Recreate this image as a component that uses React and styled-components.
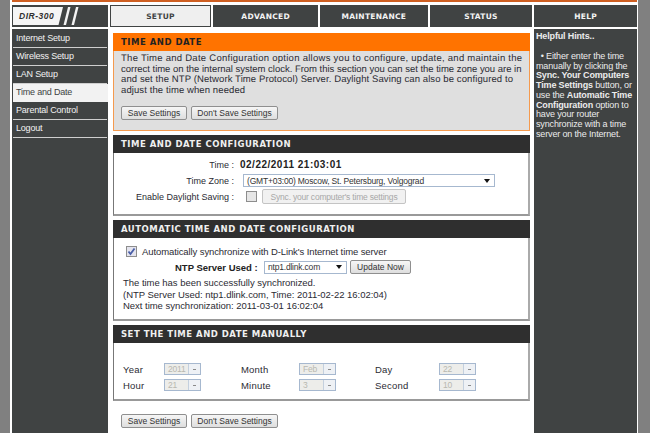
import React from 'react';
import styled, { createGlobalStyle } from 'styled-components';

const GlobalStyle = createGlobalStyle`
  html, body { margin: 0; padding: 0; background: #808080; }
  * { box-sizing: border-box; }
`;

const TABS = [
  { label: 'SETUP', width: 102, active: true },
  { label: 'ADVANCED', width: 105 },
  { label: 'MAINTENANCE', width: 108 },
  { label: 'STATUS', width: 103 },
  { label: 'HELP', width: 103 },
];

const MENU = ['Internet Setup', 'Wireless Setup', 'LAN Setup', 'Time and Date', 'Parental Control', 'Logout'];

function Select({ value, width, disabled }) {
  return (
    <SelectBox $width={width} $disabled={disabled}>
      <span>{value}</span>
      {disabled ? <SmallArrow /> : <Arrow />}
    </SelectBox>
  );
}

export default function App() {
  return (
    <Page>
      <GlobalStyle />
      <Frame>
        <TopLine />
        <TabRow>
          <LogoCell>
            <LogoBadge>DIR-300</LogoBadge>
            <svg width="20" height="18" viewBox="0 0 20 18">
              <path d="M5 0h2.500L3 18H.5zM13 0h2.500L11 18H8.500z" fill="#f2f2f2" />
            </svg>
          </LogoCell>
          {TABS.map(t => (
            <Tab key={t.label} $width={t.width} $active={t.active}>{t.label}</Tab>
          ))}
        </TabRow>
        <Columns>
          <Sidebar>
            {MENU.map(m => (
              <MenuItem key={m} $active={m === 'Time and Date'}>{m}</MenuItem>
            ))}
          </Sidebar>
          <Center>
            <IntroBox>
              <IntroTitle>TIME AND DATE</IntroTitle>
              <IntroBody>
                <IntroLine $spacing={0.27}>The Time and Date Configuration option allows you to configure, update, and maintain the</IntroLine>
                <IntroLine $spacing={-0.02}>correct time on the internal system clock. From this section you can set the time zone you are in</IntroLine>
                <IntroLine $spacing={0.1}>and set the NTP (Network Time Protocol) Server. Daylight Saving can also be configured to</IntroLine>
                <IntroLine $spacing={0.1}>adjust the time when needed</IntroLine>
                <ButtonRow>
                  <Button $width={66}>Save Settings</Button>
                  <Button $width={87}>Don't Save Settings</Button>
                </ButtonRow>
              </IntroBody>
            </IntroBox>

            <Box>
              <BoxTitle>TIME AND DATE CONFIGURATION</BoxTitle>
              <ConfigBody>
                <FieldLabel>Time :</FieldLabel>
                <TimeValue>02/22/2011 21:03:01</TimeValue>
                <FieldLabel>Time Zone :</FieldLabel>
                <Select value="(GMT+03:00) Moscow, St. Petersburg, Volgograd" width={252} />
                <FieldLabel>Enable Daylight Saving :</FieldLabel>
                <DaylightRow>
                  <CheckBox />
                  <Button $width={144} $height={15} $disabled>Sync. your computer's time settings</Button>
                </DaylightRow>
              </ConfigBody>
            </Box>

            <Box>
              <BoxTitle>AUTOMATIC TIME AND DATE CONFIGURATION</BoxTitle>
              <AutoBody>
                <AutoCheckRow>
                  <CheckBox $checked>
                    <svg width="9" height="9" viewBox="0 0 9 9">
                      <path d="M1.500 4.500l2 2.500 4-5.500" fill="none" stroke="#4a5fa8" strokeWidth="1.800" />
                    </svg>
                  </CheckBox>
                  <span>Automatically synchronize with D-Link's Internet time server</span>
                </AutoCheckRow>
                <NtpRow>
                  <NtpLabel>NTP Server Used :</NtpLabel>
                  <Select value="ntp1.dlink.com" width={83} />
                  <Button $width={61} $height={14}>Update Now</Button>
                </NtpRow>
                <SyncMessage>
                  The time has been successfully synchronized.<br />
                  (NTP Server Used: ntp1.dlink.com, Time: 2011-02-22 16:02:04)<br />
                  Next time synchronization: 2011-03-01 16:02:04
                </SyncMessage>
              </AutoBody>
            </Box>

            <Box>
              <BoxTitle>SET THE TIME AND DATE MANUALLY</BoxTitle>
              <ManualBody>
                <span>Year</span><Select value="2011" width={37} disabled />
                <span>Month</span><Select value="Feb" width={37} disabled />
                <span>Day</span><Select value="22" width={37} disabled />
                <span>Hour</span><Select value="21" width={37} disabled />
                <span>Minute</span><Select value="3" width={37} disabled />
                <span>Second</span><Select value="10" width={37} disabled />
              </ManualBody>
            </Box>

            <BottomButtons>
              <Button $width={66}>Save Settings</Button>
              <Button $width={87}>Don't Save Settings</Button>
            </BottomButtons>
          </Center>
          <Hints>
            <HintsTitle>Helpful Hints..</HintsTitle>
            <HintsText>
              &nbsp;&nbsp;• Either enter the time<br />
              manually by clicking the<br />
              <b>Sync. Your Computers</b><br />
              <b>Time Settings</b> button, or<br />
              use the <b>Automatic Time</b><br />
              <b>Configuration</b> option to<br />
              have your router<br />
              synchronize with a time<br />
              server on the Internet.
            </HintsText>
          </Hints>
        </Columns>
      </Frame>
    </Page>
  );
}

const Page = styled.div`
height: 433px;
overflow: hidden;
padding: 0 12px 0 10px;
font-family: "Liberation Sans", Arial, sans-serif;
font-size: 9.500px;
color: #2b2b33;
`

const Frame = styled.div`
height: 433px;
background: #fff;
padding: 0 1px 0 2px;
`

const TopLine = styled.div`
height: 2px;
background: #cf5f22;
`

const TabRow = styled.div`
display: flex;
height: 22px;
margin-top: 3px;
`

const LogoCell = styled.div`
width: 96px;
margin-right: 2px;
background: #404343;
display: flex;
align-items: center;
padding-left: 1px;
`

const LogoBadge = styled.div`
width: 50px;
height: 18px;
background: #f5f5f5;
clip-path: polygon(0 0, 100% 0, 91% 100%, 0 100%);
color: #2f2f2f;
font: italic bold 8.500px "Liberation Sans", sans-serif;
letter-spacing: 0.500px;
line-height: 18px;
padding-left: 6px;
`

const Tab = styled.div`
width: ${p => p.$width}px;
margin-right: 2px;
background: ${p => (p.$active ? '#efefef' : '#404343')};
border: ${p => (p.$active ? '1px solid #404343' : 'none')};
color: ${p => (p.$active ? '#404343' : '#f4f4f4')};
font: bold 7.500px "DejaVu Sans", sans-serif;
letter-spacing: 0.300px;
display: flex;
align-items: center;
justify-content: center;
&:last-child { margin-right: 0; }
`

const Columns = styled.div`
display: grid;
grid-template-columns: 96px 426px 103px;
margin-top: 2px;
`

const Sidebar = styled.div`
background: #404343;
height: 410px;
padding: 1px 1px 0 1px;
`

const MenuItem = styled.div`
height: 18px;
line-height: 16px;
padding-left: 3px;
margin-right: ${p => (p.$active ? '-1px' : '0')};
background: ${p => (p.$active ? '#f2f2f2' : 'transparent')};
color: ${p => (p.$active ? '#404343' : '#f2f2f2')};
border-bottom: 1px solid ${p => (p.$active ? '#f2f2f2' : '#cfcfcf')};
font-size: 9px;
letter-spacing: -0.200px;
`

const Center = styled.div`
padding: 4px 4px 0 5px;
display: flex;
flex-direction: column;
gap: 4px;
`

const IntroBox = styled.div`
height: 98px;
border: 1px solid #f59a4e;
background: #dfdfdf;
`

const IntroTitle = styled.div`
height: 18px;
margin: -1px -1px 0;
background: #ff7300;
color: #222;
font: bold 8.500px "DejaVu Sans", sans-serif;
letter-spacing: 0.500px;
line-height: 19px;
padding-left: 8px;
`

const IntroBody = styled.div`
padding: 3px 0 0 7px;
`

const IntroLine = styled.div`
line-height: 10.600px;
white-space: nowrap;
text-rendering: geometricPrecision;
letter-spacing: ${p => p.$spacing}px;
`

const ButtonRow = styled.div`
display: flex;
gap: 4px;
margin-top: 10px;
`

const Button = styled.div`
width: ${p => p.$width}px;
height: ${p => p.$height || 14}px;
border: 1px solid ${p => (p.$disabled ? '#c4c4c4' : '#8f8f8f')};
border-radius: 2px;
background: ${p => (p.$disabled ? '#f1f1f1' : 'linear-gradient(#f6f6f6, #dedede)')};
color: ${p => (p.$disabled ? '#a8a8a8' : '#333')};
display: flex;
align-items: center;
justify-content: center;
white-space: nowrap;
font-size: 8.500px;
letter-spacing: ${p => (p.$disabled ? '-0.200px' : '0')};
`

const Box = styled.div`
border: 1px solid #777;
border-right: 2px solid #aaa;
border-bottom: 2px solid #999;
background: #fff;
`

const BoxTitle = styled.div`
height: 18px;
margin: -1px -2px 0 -1px;
background: #2f2f2f;
color: #f0f0f0;
font: bold 8.500px "DejaVu Sans", sans-serif;
letter-spacing: 0.500px;
line-height: 19px;
padding-left: 8px;
`

const ConfigBody = styled.div`
height: 61px;
display: grid;
grid-template-columns: 120px 1fr;
column-gap: 9px;
align-content: start;
align-items: center;
padding-top: 4px;
grid-auto-rows: 15px;
row-gap: 1px;
`

const FieldLabel = styled.div`
text-align: right;
white-space: nowrap;
font-size: 9px;
`

const TimeValue = styled.div`
margin-left: -3px;
font-weight: 700;
font-size: 10px;
letter-spacing: 0.500px;
color: #222;
`

const SelectBox = styled.div`
width: ${p => p.$width}px;
height: ${p => (p.$disabled ? 12 : 13)}px;
border: 1px solid #a6b8cf;
background: ${p => (p.$disabled ? '#ededea' : '#fff')};
color: ${p => (p.$disabled ? '#b8b8b0' : '#333')};
display: flex;
align-items: center;
justify-content: space-between;
padding-left: 3px;
white-space: nowrap;
overflow: hidden;
font-size: 8.500px;
letter-spacing: -0.200px;
`

const Arrow = styled.i`
border: 3px solid transparent;
border-top: 4px solid #111;
border-bottom: 0;
margin-right: 4px;
`

const SmallArrow = styled.i`
width: 12px;
height: 10px;
background: #eef1f5;
border-left: 1px solid #c4d0de;
position: relative;
&::after {
  content: "";
  position: absolute;
  left: 4px;
  top: 5px;
  width: 3px;
  height: 1px;
  background: #8a8a8a;
}
`

const DaylightRow = styled.div`
display: flex;
align-items: center;
gap: 5px;
padding-left: 3px;
`

const CheckBox = styled.div`
width: 11px;
height: 11px;
border: 1px solid #8d8d8d;
background: ${p => (p.$checked ? '#e4e4ee' : '#e6e6e6')};
display: flex;
align-items: center;
justify-content: center;
flex: none;
`

const AutoBody = styled.div`
height: 81px;
padding: 8px 0 0 10px;
`

const AutoCheckRow = styled.div`
display: flex;
align-items: center;
gap: 5px;
padding-left: 2px;
letter-spacing: -0.100px;
`

const NtpRow = styled.div`
display: flex;
align-items: center;
margin: 3px 0 0 51px;
gap: 3px;
`

const NtpLabel = styled.div`
width: 86px;
font-weight: 700;
white-space: nowrap;
color: #222;
`

const SyncMessage = styled.div`
margin: 3px 0 0 -1px;
line-height: 11.500px;
letter-spacing: -0.030px;
white-space: nowrap;
`

const ManualBody = styled.div`
height: 56px;
display: grid;
grid-template-columns: 41px 77px 58px 76px 64px 37px;
grid-auto-rows: 16px;
align-items: center;
align-content: start;
padding: 18px 0 0 9px;
letter-spacing: 0.200px;
`

const BottomButtons = styled.div`
display: flex;
gap: 4px;
margin: 9px 0 0 8px;
`

const Hints = styled.div`
background: #404343;
height: 410px;
color: #ececec;
padding: 1px 1px 0 2px;
line-height: 9.700px;
font-size: 9px;
letter-spacing: -0.150px;
`

const HintsTitle = styled.div`
font-weight: 700;
line-height: 12px;
margin-bottom: 10px;
`

const HintsText = styled.div`
white-space: nowrap;
`
